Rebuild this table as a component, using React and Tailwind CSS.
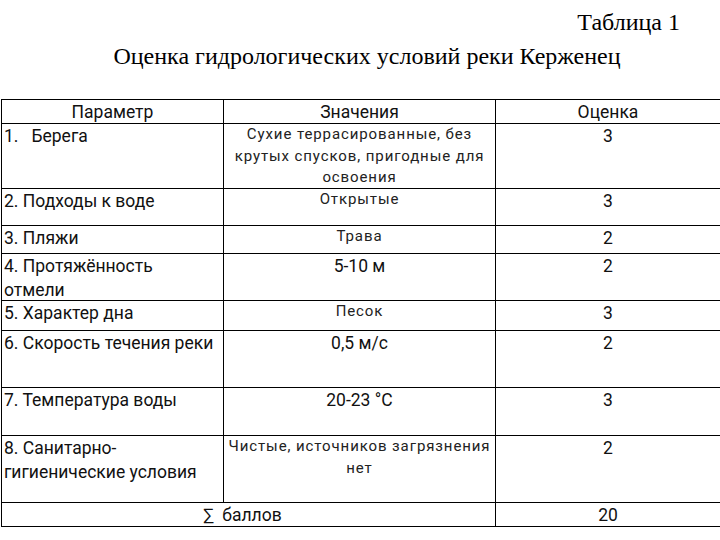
import React from "react";

const rows = [
  { h: "h-[65px]", param: ["1.\u00A0\u00A0 Берега"], value: ["Сухие террасированные, без", "крутых спусков, пригодные для", "освоения"], small: true, score: "3" },
  { h: "h-[37px]", param: ["2. Подходы к воде"], value: ["Открытые"], small: true, score: "3" },
  { h: "h-[28px]", param: ["3. Пляжи"], value: ["Трава"], small: true, score: "2" },
  { h: "h-[47px]", param: ["4. Протяжённость", "отмели"], value: ["5-10 м"], score: "2" },
  { h: "h-[30px]", param: ["5. Характер дна"], value: ["Песок"], small: true, score: "3" },
  { h: "h-[57px]", param: ["6. Скорость течения реки"], value: ["0,5 м/с"], score: "2" },
  { h: "h-[48px]", param: ["7. Температура воды"], value: ["20-23 °C"], score: "3" },
  { h: "h-[67px]", param: ["8. Санитарно-", "гигиенические условия"], value: ["Чистые, источников загрязнения", "нет"], small: true, score: "2" },
];

const Row = ({ row }) => (
  <div className={`grid grid-cols-[222px_272px_1fr] border-b border-black ${row.h}`}>
    <div className="border-r border-black pl-[2px] text-[17.5px] leading-[24px]">
      {row.param.map((line) => (
        <div key={line}>{line}</div>
      ))}
    </div>
    <div
      className={
        row.small
          ? "border-r border-black text-center text-[15px] leading-[21.5px] text-[#222] tracking-[0.9px]"
          : "border-r border-black text-center text-[17.5px] leading-[24px]"
      }
    >
      {row.value.map((line) => (
        <div key={line}>{line}</div>
      ))}
    </div>
    <div className="text-center text-[17.5px] leading-[24px]">{row.score}</div>
  </div>
);

export default function App() {
  return (
    <div className="w-[720px] h-[540px] overflow-hidden bg-white text-black">
      {/* Titles */}
      <div className="font-['Liberation_Serif',serif]">
        <div className="pt-[8px] pr-[40px] text-right text-[24px] leading-[28px]">Таблица 1</div>
        <div className="pt-[6px] text-center text-[24px] leading-[28px] pl-[14px]">
          Оценка гидрологических условий реки Керженец
        </div>
      </div>

      {/* Table */}
      <div className="mt-[29px] ml-px border-t border-l border-black font-['Roboto','Liberation_Sans',sans-serif] text-[#111]">
        <div className="grid grid-cols-[222px_272px_1fr] h-[24px] border-b border-black text-[17.5px] leading-[24px] text-center">
          <div className="border-r border-black">Параметр</div>
          <div className="border-r border-black">Значения</div>
          <div>Оценка</div>
        </div>
        {rows.map((row) => (
          <Row key={row.param[0]} row={row} />
        ))}
        <div className="grid grid-cols-[494px_1fr] h-[24px] border-b border-black text-[17.5px] leading-[24px] text-center">
          <div className="border-r border-black pr-[12px]">∑&nbsp; баллов</div>
          <div>20</div>
        </div>
      </div>
    </div>
  );
}
